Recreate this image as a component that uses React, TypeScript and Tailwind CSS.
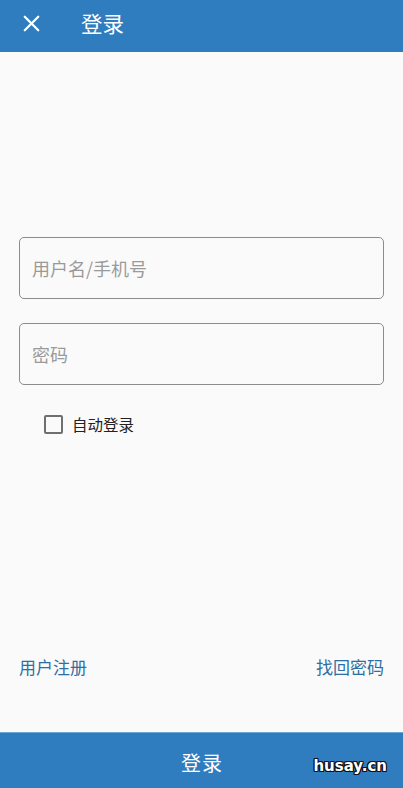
import React from 'react';
import { X } from 'lucide-react';

const font = { fontFamily: '"Noto Sans CJK SC", "Noto Sans", sans-serif' };

export default function App() {
  return (
    <div className="flex flex-col w-[403px] h-[788px] bg-[#fafafa]" style={font}>
      {/* Toolbar */}
      <div className="flex items-center h-[52px] bg-[#2f7cbf] text-white shrink-0 pb-[6px]">
        <div className="w-[62px] flex justify-center">
          <X size={27} strokeWidth={2} />
        </div>
        <div className="ml-[19px] text-[21.5px] leading-none">登录</div>
      </div>

      {/* Form */}
      <div className="flex flex-col flex-1 px-[19px] pt-[185px]">
        <div className="h-[62px] rounded-[5px] border border-[#8c8c8c] flex items-center px-[12px] text-[18px] text-[#9a9a9a]">
          用户名/手机号
        </div>
        <div className="mt-[24px] h-[62px] rounded-[5px] border border-[#8c8c8c] flex items-center px-[12px] text-[18px] text-[#9a9a9a]">
          密码
        </div>
        <div className="flex items-center mt-[28px] ml-[25px]">
          <div className="w-[19px] h-[19px] rounded-[2px] border-2 border-[#6f6f6f]" />
          <span className="ml-[9px] text-[15.5px] text-[#222]">自动登录</span>
        </div>

        <div className="flex-1" />

        <div className="flex justify-between text-[17px] text-[#2e6fa3] mb-[53px]">
          <span>用户注册</span>
          <span>找回密码</span>
        </div>
      </div>

      {/* Bottom button */}
      <div className="relative h-[56px] bg-[#2f7cbf] border-t border-[#6aa6d6] flex items-center justify-center shrink-0 pt-[5px]">
        <span className="text-white text-[20px] tracking-[1px] ml-[1px]">登录</span>
        <span
          className="absolute right-[16px] top-[26px] text-white text-[15px] font-bold leading-none"
          style={{
            fontFamily: '"DejaVu Sans", sans-serif',
            textShadow:
              '1px 0 0 #111, -1px 0 0 #111, 0 1px 0 #111, 0 -1px 0 #111, 1px 1px 0 #111, -1px -1px 0 #111, 1px -1px 0 #111, -1px 1px 0 #111',
          }}
        >
          husay.cn
        </span>
      </div>
    </div>
  );
}
